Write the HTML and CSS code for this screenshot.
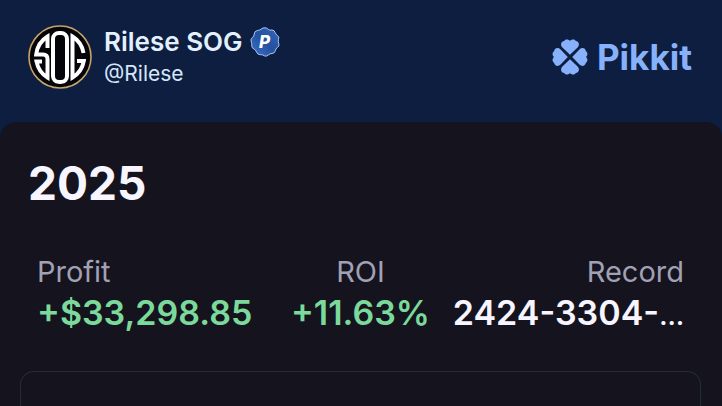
FILE: index.html
```html
<!DOCTYPE html>
<html lang="en">
<head>
<meta charset="utf-8">
<meta name="viewport" content="width=device-width, initial-scale=1">
<title>Rilese SOG</title>
<link rel="stylesheet" href="styles.css">
</head>
<body>
<header class="header">
  <div class="profile">
    <svg class="avatar" viewBox="0 0 64 64" role="img" aria-label="SOG">
      <defs><clipPath id="disc"><circle cx="32" cy="32" r="27"/></clipPath></defs>
      <circle cx="32" cy="32" r="31" fill="#050509" stroke="#c7a468" stroke-width="1.6"/>
      <g clip-path="url(#disc)" fill="none" stroke="#fff" stroke-width="4">
        <rect x="25" y="8" width="14" height="49" rx="6"/>
        <path d="M19.500 23V11.500A24 24 0 0 0 8.200 29.500H15Q19.500 29.500 19.500 34V52.500A24 24 0 0 1 8.500 36.500H14"/>
        <path d="M55.500 28A24 24 0 0 0 44.500 11.500V52.500A24 24 0 0 0 55.800 36H49"/>
      </g>
    </svg>
    <div class="identity">
      <div class="name-row">
        <h1 class="name">Rilese SOG</h1>
        <svg class="badge" viewBox="0 0 30 30" role="img" aria-label="Pro">
          <defs>
            <linearGradient id="seal" x1="0" y1="1" x2="1" y2="0">
              <stop offset="0" stop-color="#3f74cc"/>
              <stop offset=".5" stop-color="#2450a0"/>
              <stop offset="1" stop-color="#3568bd"/>
            </linearGradient>
          </defs>
          <path d="M15 .8Q17 .8 18.500 2.500Q20 3.500 22 3Q24.500 3 25.200 5.700Q25.700 7.500 27.600 8.600Q29.500 10 28.500 12.500Q27.800 14.600 28.800 16.500Q29.700 19 27.300 20.600Q25.600 21.800 25.300 23.800Q24.700 26.400 22 26.500Q20 26.500 18.500 27.800Q16.600 29.900 14.500 28.900Q12.700 27.500 10.500 27.700Q7.700 27.800 6.500 25.200Q6 23 4.200 22.200Q1.500 21 1.700 18.500Q2 16.500 1.200 14.800Q.2 12 2.500 10.400Q4.200 9.200 4.200 7Q4.400 4 7.300 3.500Q9.500 3.500 11 2.200Q12.900 .500 15 .8Z" fill="url(#seal)" stroke="#a9c8f2" stroke-width="1"/>
          <text class="badge-letter" x="14.500" y="21" text-anchor="middle">P</text>
        </svg>
      </div>
      <p class="handle">@Rilese</p>
    </div>
  </div>
  <div class="brand">
    <svg class="clover" viewBox="0 0 36 36" aria-hidden="true">
      <defs><path id="leaf" d="M18 15.800L10.400 8.600C8 6 9 2.600 12.200 2.100C13.500 0 16.700 .2 18 2.100C19.300 .2 22.500 0 23.800 2.100C27 2.600 28 6 25.600 8.600Z"/></defs>
      <use href="#leaf"/>
      <use href="#leaf" transform="rotate(90 18 18)"/>
      <use href="#leaf" transform="rotate(180 18 18)"/>
      <use href="#leaf" transform="rotate(270 18 18)"/>
    </svg>
    <span class="wordmark">Pikkit</span>
  </div>
</header>
<main class="panel">
  <h2 class="year">2025</h2>
  <dl class="stats">
    <div class="stat">
      <dt>Profit</dt>
      <dd class="gain">+$33,298.85</dd>
    </div>
    <div class="stat center">
      <dt>ROI</dt>
      <dd class="gain">+11.63%</dd>
    </div>
    <div class="stat end">
      <dt>Record</dt>
      <dd>2424-3304-<span class="more">…</span></dd>
    </div>
  </dl>
  <section class="chart-card"></section>
</main>
</body>
</html>
```
FILE: styles.css
```css
* { box-sizing: border-box; }

html { height: 100%; }

body {
  margin: 0;
  height: 100%;
  overflow: hidden;
  display: flex;
  flex-direction: column;
  background: #0d1e40;
  color: #f7f5ff;
  font-family: Inter, "Liberation Sans", sans-serif;
}

h1, h2, p, dl, dd { margin: 0; }

.header {
  display: flex;
  justify-content: space-between;
  align-items: flex-start;
  padding: 25px 30px 33px 28px;
}

.profile, .name-row, .brand {
  display: flex;
  align-items: center;
}

.profile { gap: 12px; }
.avatar { width: 64px; height: 64px; }

.name-row { gap: 7px; }

.name {
  font-size: 26px;
  line-height: 34px;
  font-weight: 600;
  color: #e3f1ff;
}

.badge { width: 30px; height: 30px; }

.badge-letter {
  font-size: 17px;
  font-weight: 800;
  font-style: italic;
  fill: #fff;
}

.handle {
  font-size: 21px;
  line-height: 30px;
  color: #d5e6fa;
}

.brand {
  gap: 9px;
  padding-top: 12px;
  color: #87b2fb;
}

.clover { width: 36px; height: 36px; fill: currentColor; }

.wordmark {
  font-size: 35px;
  line-height: 40px;
  font-weight: 700;
}

.panel {
  flex: 1;
  display: flex;
  flex-direction: column;
  padding: 32px 21px 0 20px;
  border-radius: 16px 16px 0 0;
  background: #15131d;
}

.year {
  padding-left: 8px;
  font-size: 46px;
  line-height: 58px;
  font-weight: 700;
}

.stats {
  display: grid;
  grid-template-columns: 1fr auto 1fr;
  padding: 40px 17px 0;
}

.stat.center { text-align: center; }
.stat.end { text-align: right; }

.stat dt {
  font-size: 29px;
  line-height: 40px;
  color: #a1a1b6;
}

.stat dd {
  font-size: 34px;
  line-height: 42px;
  font-weight: 600;
  white-space: nowrap;
}

.stat .gain { color: #7bd99c; }

.more {
  font-size: 26px;
  line-height: 1;
}

.chart-card {
  flex: 1;
  margin-top: 37px;
  border: 1px solid #242b3b;
  border-bottom: 0;
  border-radius: 14px 14px 0 0;
}
```
